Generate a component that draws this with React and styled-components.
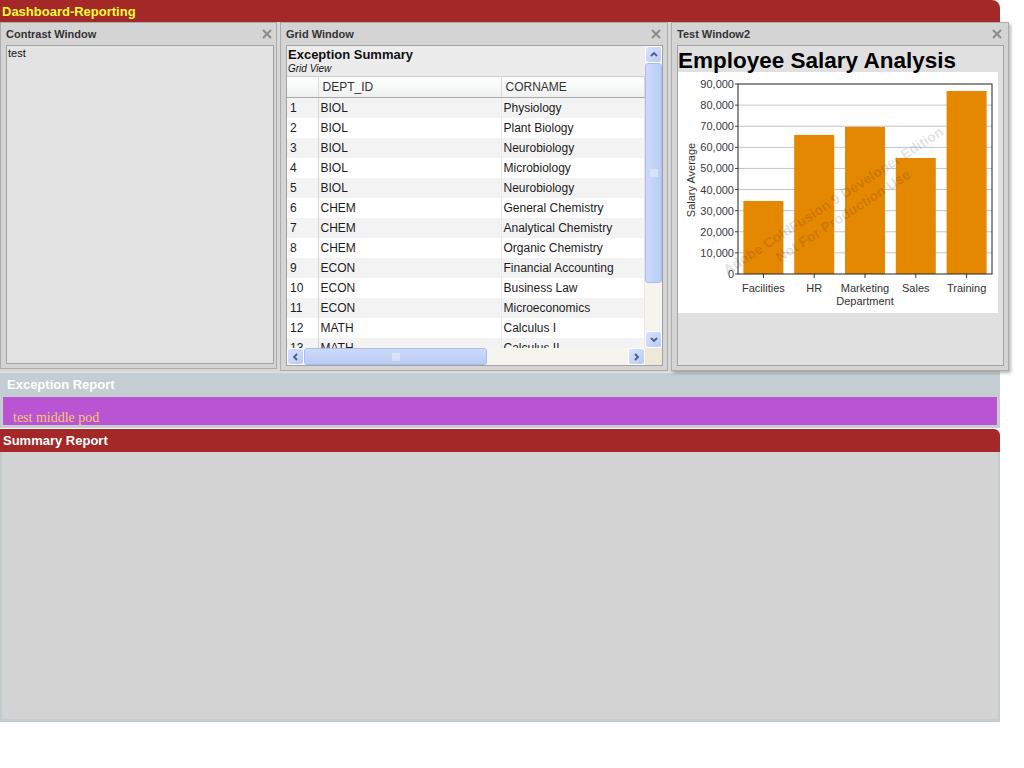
import React from "react";
import styled, { createGlobalStyle } from "styled-components";

const GlobalStyle = createGlobalStyle`
  body {
    margin: 0;
    background: #ffffff;
    font-family: "Liberation Sans", Arial, sans-serif;
  }
`;

const Page = styled.div`
  width: 1000px;
`;

const TopBar = styled.div`
  height: 22px;
  padding-left: 2px;
  border-top-right-radius: 8px;
  background-color: #a52828;
  color: #ffff33;
  font-size: 13px;
  font-weight: bold;
  line-height: 23px;
`;

const WindowRow = styled.div`
  display: flex;
  align-items: flex-start;
  gap: 3px;
  height: 350px;
  background-color: #d8d8d8;
`;

const Window = styled.div`
  display: flex;
  flex-direction: column;
  flex: none;
  box-sizing: border-box;
  width: ${({ $width }) => $width}px;
  height: ${({ $height }) => $height}px;
  padding: 0 ${({ $padRight }) => $padRight}px 4px ${({ $padLeft }) => $padLeft}px;
  border: 1px solid #acacac;
  background-color: #d4d4d4;
  box-shadow: ${({ $floating }) => ($floating ? "2px 2px 3px rgba(0, 0, 0, 0.28)" : "none")};
`;

const WindowHeader = styled.div`
  display: flex;
  align-items: center;
  justify-content: space-between;
  height: 22px;
  flex: none;
  color: #333333;
  font-size: 11px;
  font-weight: bold;
`;

const CloseIcon = styled.svg`
  margin-right: 2px;
`;

const WindowBody = styled.div`
  flex: 1;
  box-sizing: border-box;
  border: 1px solid #a2a2a2;
  background-color: ${({ $bg }) => $bg || "#e3e3e3"};
  font-size: 11px;
  color: #111111;
  overflow: hidden;
`;

const PlainText = styled.div`
  padding: 1px 0 0 1px;
`;

/* ---------- grid ---------- */

const GridFrame = styled.div`
  display: grid;
  grid-template-columns: 1fr 17px;
  grid-template-rows: 1fr 17px;
  height: 100%;
  background-color: #ffffff;
`;

const ScrollArea = styled.div`
  overflow: hidden;
  background-color: #ffffff;
`;

const Caption = styled.div`
  height: 30px;
  padding-left: 1px;
  background-color: #ececec;
  color: #111111;
`;

const CaptionTitle = styled.div`
  font-size: 13px;
  font-weight: bold;
  line-height: 16px;
  padding-top: 1px;
`;

const CaptionSub = styled.div`
  font-size: 10px;
  font-style: italic;
  line-height: 11px;
`;

const Table = styled.table`
  border-collapse: collapse;
  table-layout: fixed;
  width: 100%;
  font-size: 12px;
  color: #1c1c1c;
`;

const HeadCell = styled.th`
  height: 20px;
  padding: 0 4px;
  font-weight: normal;
  text-align: left;
  color: #333333;
  border-top: 1px solid #cfcfcf;
  border-bottom: 1px solid #a9a9a9;
  border-right: 1px solid #dadada;
  background: linear-gradient(#ffffff, #eef0f0);
`;

const Row = styled.tr`
  background-color: ${({ $odd }) => ($odd ? "#f3f3f3" : "#ffffff")};
`;

const Cell = styled.td`
  height: 20px;
  padding: 0 ${({ $num }) => ($num ? 3 : 2)}px;
  line-height: 18px;
  white-space: nowrap;
  overflow: hidden;
  border-right: 1px solid ${({ $num }) => ($num ? "#d4d4d4" : "#e8e8e8")};
`;

const VScroll = styled.div`
  display: flex;
  flex-direction: column;
  background-color: #f5f4ef;
`;

const HScroll = styled.div`
  display: flex;
  background-color: #f5f4ef;
`;

const ScrollButton = styled.div`
  display: flex;
  align-items: center;
  justify-content: center;
  flex: none;
  box-sizing: border-box;
  width: 17px;
  height: 17px;
  border: 1px solid #ffffff;
  border-radius: 3px;
  background: linear-gradient(135deg, #d7e2fd, #b8cbf6);
`;

const Thumb = styled.div`
  display: flex;
  align-items: center;
  justify-content: center;
  box-sizing: border-box;
  flex: none;
  ${({ $horizontal, $size }) =>
    $horizontal ? `width: ${$size}px; height: 17px;` : `height: ${$size}px; width: 17px;`}
  border: 1px solid #a9bdf0;
  border-radius: 3px;
  background: ${({ $horizontal }) =>
    $horizontal
      ? "linear-gradient(#cddaf9, #b9cbf6)"
      : "linear-gradient(90deg, #cddaf9, #b9cbf6)"};
`;

const Track = styled.div`
  flex: 1;
`;

const Corner = styled.div`
  background-color: #ece9d8;
`;

/* ---------- chart ---------- */

const ChartTitle = styled.div`
  height: 26px;
  padding-left: 0;
  color: #000000;
  font-size: 22.5px;
  font-weight: bold;
  line-height: 30px;
`;

const ChartBox = styled.div`
  width: 320px;
  height: 241px;
  background-color: #ffffff;
`;

/* ---------- pods ---------- */

const PodBlue = styled.div`
  padding: 0 3px 3px;
  background-color: #c3cdd2;
  border-top: 1px solid #dde3e6;
`;

const PodBlueTitle = styled.div`
  height: 24px;
  padding-left: 4px;
  color: #ffffff;
  font-size: 13px;
  font-weight: bold;
  line-height: 24px;
`;

const PurpleBody = styled.div`
  height: 28px;
  box-sizing: border-box;
  padding: 13px 0 0 10px;
  background-color: #b955d3;
  color: #f7c76a;
  font-family: "Liberation Serif", "Times New Roman", serif;
  font-size: 14px;
  line-height: 16px;
`;

const RedTitle = styled.div`
  height: 23px;
  margin-top: 1px;
  padding-left: 3px;
  border-top-right-radius: 6px;
  background-color: #a52828;
  color: #ffffff;
  font-size: 13px;
  font-weight: bold;
  line-height: 24px;
`;

const SummaryBody = styled.div`
  height: 267px;
  border: 2px solid #c3cbce;
  border-top: none;
  border-bottom-width: 3px;
  background-color: #d3d3d3;
`;

const rows = [
  ["BIOL", "Physiology"],
  ["BIOL", "Plant Biology"],
  ["BIOL", "Neurobiology"],
  ["BIOL", "Microbiology"],
  ["BIOL", "Neurobiology"],
  ["CHEM", "General Chemistry"],
  ["CHEM", "Analytical Chemistry"],
  ["CHEM", "Organic Chemistry"],
  ["ECON", "Financial Accounting"],
  ["ECON", "Business Law"],
  ["ECON", "Microeconomics"],
  ["MATH", "Calculus I"],
  ["MATH", "Calculus II"],
  ["MATH", "Calculus III"],
];

const salaries = [
  { label: "Facilities", value: 34600 },
  { label: "HR", value: 65900 },
  { label: "Marketing", value: 69700 },
  { label: "Sales", value: 54950 },
  { label: "Training", value: 86700 },
];

const Close = () => (
  <CloseIcon width="10" height="10" viewBox="0 0 10 10">
    <path d="M1 1 L9 9 M9 1 L1 9" stroke="#8c8c8c" strokeWidth="2" />
  </CloseIcon>
);

const Arrow = ({ dir }) => {
  const paths = {
    up: "M2 6 L5 3 L8 6",
    down: "M2 3 L5 6 L8 3",
    left: "M6 2 L3 5 L6 8",
    right: "M3 2 L6 5 L3 8",
  };
  return (
    <svg width="10" height="10" viewBox="0 0 10 10">
      <path d={paths[dir]} fill="none" stroke="#4d6185" strokeWidth="1.8" />
    </svg>
  );
};

const Grip = ({ horizontal }) => (
  <svg width="8" height="8" viewBox="0 0 8 8">
    {[1, 3, 5, 7].map((p) =>
      horizontal ? (
        <line key={p} x1={p} y1="0" x2={p} y2="8" stroke="#eef3fe" strokeWidth="1" />
      ) : (
        <line key={p} x1="0" y1={p} x2="8" y2={p} stroke="#eef3fe" strokeWidth="1" />
      )
    )}
  </svg>
);

const SalaryChart = () => {
  const left = 60;
  const right = 314;
  const top = 12;
  const bottom = 202;
  const step = (bottom - top) / 9;
  const slot = (right - left) / salaries.length;
  return (
    <svg width="320" height="241" viewBox="0 0 320 241" fontFamily="Liberation Sans, Arial, sans-serif">
      {Array.from({ length: 10 }, (_, i) => {
        const y = bottom - i * step;
        return (
          <g key={i}>
            {i > 0 && i < 9 && <line x1={left} y1={y} x2={right} y2={y} stroke="#c4c4c4" />}
            <line x1={left - 3} y1={y} x2={left} y2={y} stroke="#444" />
            <text x={left - 4} y={y + 4} fontSize="11" fill="#3a3a3a" textAnchor="end">
              {i === 0 ? "0" : `${i * 10},000`}
            </text>
          </g>
        );
      })}
      {salaries.map((d, i) => {
        const h = (d.value / 10000) * step;
        const cx = left + slot * i + slot / 2;
        return (
          <g key={d.label}>
            <rect x={cx - 20} y={bottom - h} width="40" height={h} fill="#e48701" />
            <line x1={cx} y1={bottom} x2={cx} y2={bottom + 4} stroke="#333" />
            <text x={cx} y={220} fontSize="11" fill="#333" textAnchor="middle">
              {d.label}
            </text>
          </g>
        );
      })}
      <rect x={left} y={top} width={right - left} height={bottom - top} fill="none" stroke="#222" />
      <text x={(left + right) / 2} y={233} fontSize="11" fill="#333" textAnchor="middle">
        Department
      </text>
      <text transform="translate(17 108) rotate(-90)" fontSize="11" fill="#333" textAnchor="middle">
        Salary Average
      </text>
      <g transform="translate(160 136) rotate(-33)" fontSize="14" fontWeight="bold" fill="#000" fillOpacity="0.12" textAnchor="middle">
        <text y="-4">Adobe ColdFusion 9 Developer Edition</text>
        <text y="14">Not For Production Use</text>
      </g>
    </svg>
  );
};

const GridWindowBody = () => (
  <GridFrame>
    <ScrollArea>
      <Caption>
        <CaptionTitle>Exception Summary</CaptionTitle>
        <CaptionSub>Grid View</CaptionSub>
      </Caption>
      <Table>
        <colgroup>
          <col style={{ width: 31 }} />
          <col style={{ width: 183 }} />
          <col />
        </colgroup>
        <thead>
          <tr>
            <HeadCell />
            <HeadCell>DEPT_ID</HeadCell>
            <HeadCell>CORNAME</HeadCell>
          </tr>
        </thead>
        <tbody>
          {rows.map(([dept, name], i) => (
            <Row key={i} $odd={i % 2 === 0}>
              <Cell $num>{i + 1}</Cell>
              <Cell>{dept}</Cell>
              <Cell>{name}</Cell>
            </Row>
          ))}
        </tbody>
      </Table>
    </ScrollArea>
    <VScroll>
      <ScrollButton>
        <Arrow dir="up" />
      </ScrollButton>
      <Thumb $size={220}>
        <Grip />
      </Thumb>
      <Track />
      <ScrollButton>
        <Arrow dir="down" />
      </ScrollButton>
    </VScroll>
    <HScroll>
      <ScrollButton>
        <Arrow dir="left" />
      </ScrollButton>
      <Thumb $horizontal $size={183}>
        <Grip horizontal />
      </Thumb>
      <Track />
      <ScrollButton>
        <Arrow dir="right" />
      </ScrollButton>
    </HScroll>
    <Corner />
  </GridFrame>
);

const App = () => (
  <Page>
    <GlobalStyle />
    <TopBar>Dashboard-Reporting</TopBar>
    <WindowRow>
      <Window $width={277} $height={347} $padLeft={5} $padRight={2}>
        <WindowHeader>
          <span>Contrast Window</span>
          <Close />
        </WindowHeader>
        <WindowBody>
          <PlainText>test</PlainText>
        </WindowBody>
      </Window>
      <Window $width={388} $height={349} $padLeft={5} $padRight={4}>
        <WindowHeader>
          <span>Grid Window</span>
          <Close />
        </WindowHeader>
        <WindowBody $bg="#ffffff">
          <GridWindowBody />
        </WindowBody>
      </Window>
      <Window $width={338} $height={349} $padLeft={5} $padRight={4} $floating>
        <WindowHeader>
          <span>Test Window2</span>
          <Close />
        </WindowHeader>
        <WindowBody $bg="#e0e0e0">
          <ChartTitle>Employee Salary Analysis</ChartTitle>
          <ChartBox>
            <SalaryChart />
          </ChartBox>
        </WindowBody>
      </Window>
    </WindowRow>
    <PodBlue>
      <PodBlueTitle>Exception Report</PodBlueTitle>
      <PurpleBody>test middle pod</PurpleBody>
    </PodBlue>
    <RedTitle>Summary Report</RedTitle>
    <SummaryBody />
  </Page>
);

export default App;
